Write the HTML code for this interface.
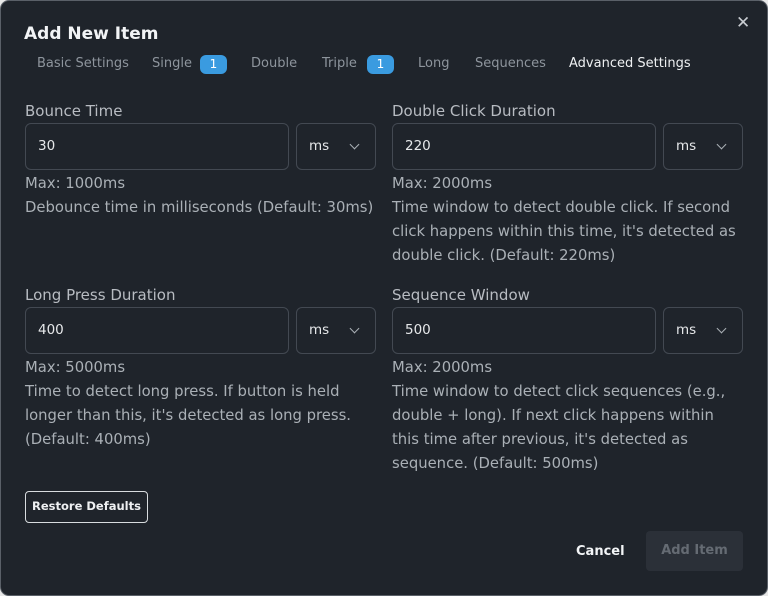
<!DOCTYPE html>
<html><head><style>
*{margin:0;padding:0;box-sizing:border-box}
body{width:768px;height:596px;background:#e8e8e8;font-family:"DejaVu Sans","Liberation Sans",sans-serif;overflow:hidden}
.d{position:absolute;left:0;top:0;width:768px;height:596px;background:#1f242b;border:1px solid #5a6068;border-radius:9px;color:#c8ccd1}
.a{position:absolute;white-space:nowrap}
.t{font-size:17px;font-weight:bold;color:#f2f4f6;left:23px;top:23px}
.tab{font-size:13px;color:#8e959d;top:55px}
.badge{position:absolute;top:54px;height:19px;width:27px;background:#3a9be0;border-radius:6px;color:#fff;font-size:12px;text-align:center;line-height:19px}
.lab{font-size:15px;color:#b8bcc2}
.inp{position:absolute;border:1px solid #434952;border-radius:6px;height:47px}
.v{font-size:13.5px;color:#e6e8ea}
.h{font-size:14.8px;color:#aab0b6;line-height:24px;white-space:normal}
.chev{position:absolute;width:7px;height:7px;border-right:1.3px solid #aab0b6;border-bottom:1.3px solid #aab0b6;transform:rotate(45deg)}
</style></head><body><div class="d">
<div class="a t">Add New Item</div>
<div class="a tab" style="left:36px">Basic Settings</div>
<div class="a tab" style="left:151px">Single</div><div class="badge" style="left:199px">1</div>
<div class="a tab" style="left:250px">Double</div>
<div class="a tab" style="left:321px">Triple</div><div class="badge" style="left:366px">1</div>
<div class="a tab" style="left:417px">Long</div>
<div class="a tab" style="left:474px">Sequences</div>
<div class="a tab" style="left:568px;color:#eef0f2">Advanced Settings</div>
<div class="a" style="left:735px;top:12px;font-size:17px;color:#c8ccd1">✕</div>

<div class="a lab" style="left:24px;top:101px">Bounce Time</div>
<div class="inp" style="left:24px;top:122px;width:264px"></div><div class="a v" style="left:37px;top:137px">30</div>
<div class="inp" style="left:295px;top:122px;width:80px"></div><div class="a v" style="left:308px;top:137px">ms</div><div class="chev" style="left:350px;top:140px"></div>
<div class="a h" style="left:24px;top:171px;width:356px">Max: 1000ms<br>Debounce time in milliseconds (Default: 30ms)</div>

<div class="a lab" style="left:391px;top:101px">Double Click Duration</div>
<div class="inp" style="left:391px;top:122px;width:264px"></div><div class="a v" style="left:404px;top:137px">220</div>
<div class="inp" style="left:662px;top:122px;width:80px"></div><div class="a v" style="left:675px;top:137px">ms</div><div class="chev" style="left:717px;top:140px"></div>
<div class="a h" style="left:391px;top:171px;width:350px">Max: 2000ms<br>Time window to detect double click. If second click happens within this time, it's detected as double click. (Default: 220ms)</div>

<div class="a lab" style="left:24px;top:285px">Long Press Duration</div>
<div class="inp" style="left:24px;top:306px;width:264px"></div><div class="a v" style="left:37px;top:321px">400</div>
<div class="inp" style="left:295px;top:306px;width:80px"></div><div class="a v" style="left:308px;top:321px">ms</div><div class="chev" style="left:350px;top:324px"></div>
<div class="a h" style="left:24px;top:355px;width:356px">Max: 5000ms<br>Time to detect long press. If button is held longer than this, it's detected as long press. (Default: 400ms)</div>

<div class="a lab" style="left:391px;top:285px">Sequence Window</div>
<div class="inp" style="left:391px;top:306px;width:264px"></div><div class="a v" style="left:404px;top:321px">500</div>
<div class="inp" style="left:662px;top:306px;width:80px"></div><div class="a v" style="left:675px;top:321px">ms</div><div class="chev" style="left:717px;top:324px"></div>
<div class="a h" style="left:391px;top:355px;width:350px">Max: 2000ms<br>Time window to detect click sequences (e.g., double + long). If next click happens within this time after previous, it's detected as sequence. (Default: 500ms)</div>

<div class="a" style="left:24px;top:490px;width:123px;height:32px;border:1.3px solid #d8dcdf;border-radius:4px;color:#eef0f2;font-size:11.5px;font-weight:bold;text-align:center;line-height:29px">Restore Defaults</div>
<div class="a" style="left:575px;top:543px;font-size:13px;font-weight:bold;color:#f2f4f6">Cancel</div>
<div class="a" style="left:645px;top:530px;width:97px;height:40px;background:#2b3038;border-radius:4px;color:#656b73;font-size:13px;font-weight:bold;text-align:center;line-height:40px">Add Item</div>
</div></body></html>
